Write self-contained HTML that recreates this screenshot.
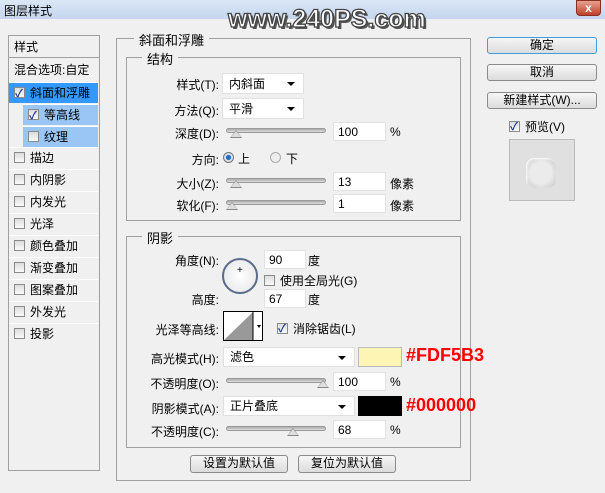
<!DOCTYPE html><html><head><meta charset="utf-8"><style>
*{margin:0;padding:0;box-sizing:border-box}
body{width:605px;height:493px;background:#f0f0f0;font-family:"Liberation Sans","Noto Sans CJK SC",sans-serif;font-size:12px;color:#000;position:relative;overflow:hidden}
.a{position:absolute;white-space:nowrap}
.title{left:0;top:0;width:605px;height:19px;background:linear-gradient(#dbe7f5,#c4d6ee)}
.box{position:absolute;border:1px solid #a0a0a0}
.lbl{position:absolute;background:#f0f0f0;padding:0 5px;font-size:13px}
.row{position:absolute;left:9px;width:89px;height:21px;border-top:1px solid #fff;line-height:21px;font-size:12px}
.cb{display:inline-block;width:11px;height:11px;border:1px solid #8a8a8a;background:linear-gradient(#ddd,#fafafa);vertical-align:-1px;margin-right:5px;position:relative}
.cb.on::after{content:"✓";position:absolute;left:0;top:-4px;font-size:11px;color:#1f3f8f;font-weight:bold}
.r{text-align:right;width:100px}
.dd{position:absolute;background:#fff;border:1px solid #e0e0e0;padding-left:6px;line-height:20px}
.dd::after{content:"";position:absolute;right:8px;top:8px;border:4px solid transparent;border-top:4px solid #000}
.in{position:absolute;background:#fff;border:1px solid #e2e2e2;height:19px;line-height:18px;padding-left:4px}
.sl{position:absolute;height:5px;border:1px solid #999;border-radius:3px;background:linear-gradient(#aaa,#ddd)}
.th{position:absolute;width:0;height:0;border-left:6px solid transparent;border-right:6px solid transparent;border-bottom:8px solid #888}
.th::after{content:"";position:absolute;left:-5px;top:1px;border-left:5px solid transparent;border-right:5px solid transparent;border-bottom:6px solid #ddd}
.btn{position:absolute;border:1px solid #8a8a8a;border-radius:3px;background:linear-gradient(#f6f6f6,#dcdcdc);text-align:center;line-height:15px;font-size:12px}
</style></head><body>
<div class="a title"></div>
<div class="a" style="left:4px;top:2px;font-size:12px">图层样式</div>
<div class="a" style="left:576px;top:0;width:25px;height:16px;background:linear-gradient(#e8a090,#c0412c);border:1px solid #8a3020;border-radius:0 0 4px 4px;color:#fff;text-align:center;font-weight:bold;line-height:14px;font-size:12px">x</div>
<div class="a" style="left:228px;top:5px;font-size:25px;font-weight:bold;color:#fff;-webkit-text-stroke:1.3px #444;text-shadow:2px 2px 0 #555">www.240PS.com</div>

<div class="box" style="left:8px;top:35px;width:92px;height:436px;background:#f0f0f0"></div>
<div class="a" style="left:14px;top:38px;font-size:12px">样式</div>
<div class="a" style="left:9px;top:57px;width:90px;border-top:1px solid #a0a0a0;height:1px"></div>
<div class="a" style="left:14px;top:61px;font-size:12px">混合选项:自定</div>
<div class="row" style="top:82px;background:#3399ff;color:#000;padding-left:5px"><span class="cb on"></span>斜面和浮雕</div>
<div class="row" style="top:104px;left:23px;width:75px;background:#99c6f5;padding-left:5px"><span class="cb on"></span>等高线</div>
<div class="row" style="top:126px;left:23px;width:75px;background:#99c6f5;padding-left:5px"><span class="cb"></span>纹理</div>
<div class="row" style="top:147px;padding-left:5px"><span class="cb"></span>描边</div>
<div class="row" style="top:169px;padding-left:5px"><span class="cb"></span>内阴影</div>
<div class="row" style="top:191px;padding-left:5px"><span class="cb"></span>内发光</div>
<div class="row" style="top:213px;padding-left:5px"><span class="cb"></span>光泽</div>
<div class="row" style="top:235px;padding-left:5px"><span class="cb"></span>颜色叠加</div>
<div class="row" style="top:257px;padding-left:5px"><span class="cb"></span>渐变叠加</div>
<div class="row" style="top:279px;padding-left:5px"><span class="cb"></span>图案叠加</div>
<div class="row" style="top:301px;padding-left:5px"><span class="cb"></span>外发光</div>
<div class="row" style="top:323px;padding-left:5px"><span class="cb"></span>投影</div>

<div class="box" style="left:116px;top:38px;width:355px;height:443px"></div>
<div class="lbl" style="left:134px;top:30px">斜面和浮雕</div>
<div class="box" style="left:126px;top:57px;width:335px;height:164px"></div>
<div class="lbl" style="left:142px;top:49px">结构</div>
<div class="a r" style="left:119px;top:76px">样式(T):</div>
<div class="dd" style="left:222px;top:73px;width:82px;height:21px">内斜面</div>
<div class="a r" style="left:119px;top:102px">方法(Q):</div>
<div class="dd" style="left:222px;top:98px;width:82px;height:21px">平滑</div>
<div class="a r" style="left:119px;top:125px">深度(D):</div>
<div class="sl" style="left:226px;top:128px;width:100px"></div><div class="th" style="left:230px;top:130px"></div>
<div class="in" style="left:333px;top:122px;width:53px">100</div><div class="a" style="left:390px;top:125px">%</div>
<div class="a r" style="left:119px;top:151px">方向:</div>
<div class="a" style="left:223px;top:152px;width:11px;height:11px;border-radius:50%;border:1px solid #777;background:radial-gradient(#1a6fc8 35%,#dde 45%)"></div>
<div class="a" style="left:238px;top:150px">上</div>
<div class="a" style="left:270px;top:152px;width:11px;height:11px;border-radius:50%;border:1px solid #aaa;background:#eee"></div>
<div class="a" style="left:286px;top:150px">下</div>
<div class="a r" style="left:119px;top:175px">大小(Z):</div>
<div class="sl" style="left:226px;top:178px;width:100px"></div><div class="th" style="left:230px;top:180px"></div>
<div class="in" style="left:333px;top:172px;width:53px">13</div><div class="a" style="left:390px;top:175px">像素</div>
<div class="a r" style="left:119px;top:197px">软化(F):</div>
<div class="sl" style="left:226px;top:200px;width:100px"></div><div class="th" style="left:226px;top:202px"></div>
<div class="in" style="left:333px;top:194px;width:53px">1</div><div class="a" style="left:390px;top:197px">像素</div>

<div class="box" style="left:126px;top:236px;width:335px;height:212px"></div>
<div class="lbl" style="left:142px;top:228px">阴影</div>
<div class="a r" style="left:119px;top:252px">角度(N):</div>
<div class="a" style="left:222px;top:258px;width:36px;height:36px;border-radius:50%;border:2px solid #5a6b8c;background:radial-gradient(#fff,#e4e4e4)"></div>
<div class="a" style="left:237px;top:265px;font-size:10px">+</div>
<div class="in" style="left:264px;top:250px;width:42px">90</div><div class="a" style="left:308px;top:252px">度</div>
<div class="a" style="left:264px;top:272px"><span class="cb"></span>使用全局光(G)</div>
<div class="a r" style="left:119px;top:291px">高度:</div>
<div class="in" style="left:264px;top:289px;width:42px">67</div><div class="a" style="left:308px;top:291px">度</div>
<div class="a r" style="left:119px;top:321px">光泽等高线:</div>
<div class="a" style="left:223px;top:311px;width:40px;height:30px;border:1px solid #000;background:#fff"></div>
<svg class="a" style="left:224px;top:312px" width="40" height="28"><polygon points="0,28 29,0 29,28" fill="#999"/><line x1="29" y1="0" x2="29" y2="28" stroke="#000"/><polygon points="33,13 37,13 35,16" fill="#000"/></svg>
<div class="a" style="left:277px;top:320px"><span class="cb on"></span>消除锯齿(L)</div>
<div class="a r" style="left:119px;top:350px">高光模式(H):</div>
<div class="dd" style="left:223px;top:347px;width:132px;height:20px;line-height:19px">滤色</div>
<div class="a" style="left:358px;top:347px;width:44px;height:20px;background:#fdf5b3;border:1px solid #bbb"></div>
<div class="a" style="left:406px;top:345px;font-size:18px;font-weight:bold;color:#f00">#FDF5B3</div>
<div class="a r" style="left:119px;top:375px">不透明度(O):</div>
<div class="sl" style="left:226px;top:378px;width:100px"></div><div class="th" style="left:317px;top:380px"></div>
<div class="in" style="left:333px;top:372px;width:53px">100</div><div class="a" style="left:390px;top:375px">%</div>
<div class="a r" style="left:119px;top:400px">阴影模式(A):</div>
<div class="dd" style="left:223px;top:396px;width:132px;height:20px;line-height:19px">正片叠底</div>
<div class="a" style="left:358px;top:396px;width:44px;height:20px;background:#000"></div>
<div class="a" style="left:406px;top:395px;font-size:18px;font-weight:bold;color:#f00">#000000</div>
<div class="a r" style="left:119px;top:423px">不透明度(C):</div>
<div class="sl" style="left:226px;top:426px;width:100px"></div><div class="th" style="left:287px;top:428px"></div>
<div class="in" style="left:333px;top:420px;width:53px">68</div><div class="a" style="left:390px;top:423px">%</div>
<div class="btn" style="left:190px;top:455px;width:98px;height:18px">设置为默认值</div>
<div class="btn" style="left:298px;top:455px;width:98px;height:18px">复位为默认值</div>

<div class="btn" style="left:487px;top:37px;width:110px;height:17px;border-color:#3c9ee0">确定</div>
<div class="btn" style="left:487px;top:64px;width:110px;height:17px">取消</div>
<div class="btn" style="left:487px;top:92px;width:110px;height:17px">新建样式(W)...</div>
<div class="a" style="left:509px;top:118px"><span class="cb on"></span>预览(V)</div>
<div class="a" style="left:509px;top:139px;width:66px;height:62px;border:1px solid #bbb;background:#e0e0e0"></div>
<div class="a" style="left:526px;top:158px;width:30px;height:30px;border-radius:8px;background:radial-gradient(#ebebeb 50%,#c4c4c4);box-shadow:inset 1px 1px 2px #fff"></div>
</body></html>
